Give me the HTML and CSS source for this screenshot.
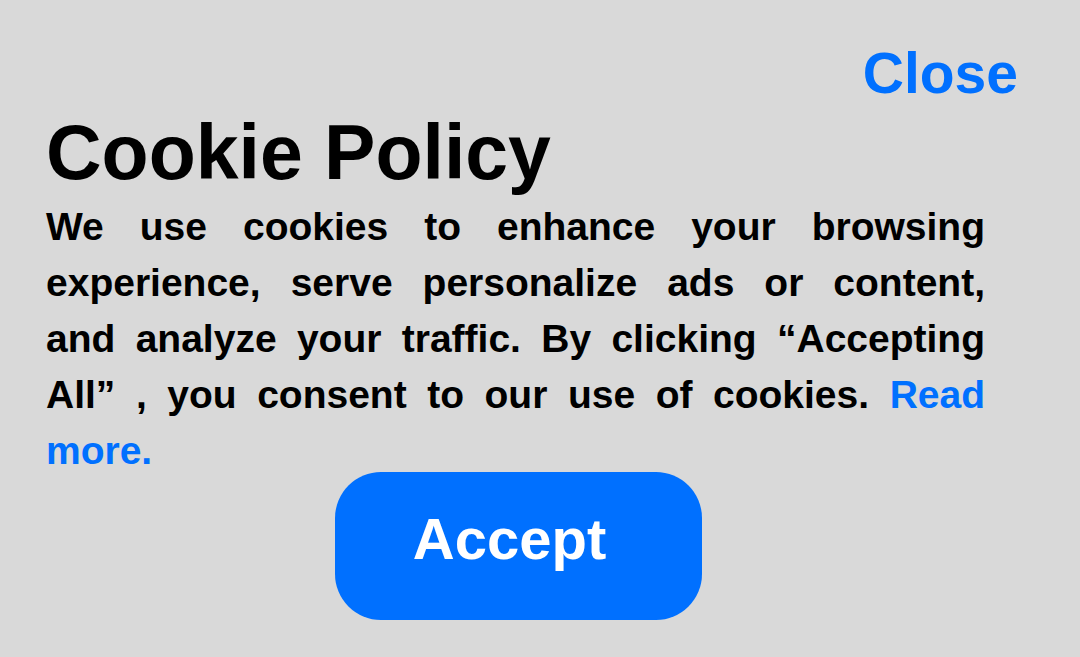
FILE: index.html
```html
<!DOCTYPE html>
<html lang="en">
<head>
<meta charset="utf-8">
<title>Cookie Policy</title>
<link rel="stylesheet" href="styles.css">
</head>
<body>
<div class="modal">
  <div class="top-bar">
    <a class="close" href="#">Close</a>
  </div>
  <h1 class="title">Cookie Policy</h1>
  <p class="text">We use cookies to enhance your browsing experience, serve personalize ads or content, and analyze your traffic. By clicking “Accepting All” , you consent to our use of cookies. <a class="link" href="#">Read more.</a></p>
  <div class="actions">
    <button class="accept" type="button">Accept</button>
  </div>
</div>
</body>
</html>
```

FILE: styles.css
```css
html, body {
  margin: 0;
  padding: 0;
  background: #d9d9d9;
}

body {
  font-family: "Liberation Sans", Arial, sans-serif;
  width: 1080px;
  height: 657px;
  overflow: hidden;
}

.modal {
  display: flex;
  flex-direction: column;
  padding: 41px 95px 0 46px;
}

.top-bar {
  display: flex;
  justify-content: flex-end;
  margin-right: -33px;
}

.close {
  font-size: 57px;
  font-weight: bold;
  line-height: 64px;
  color: #0070ff;
  text-decoration: none;
}

.title {
  margin: 1px 0 0;
  font-size: 77px;
  font-weight: bold;
  line-height: 92px;
  color: #000;
}

.text {
  margin: 1px 0 0;
  font-size: 39px;
  font-weight: bold;
  line-height: 56px;
  word-spacing: 3px;
  text-align: justify;
  color: #000;
}

.link {
  color: #0070ff;
  text-decoration: none;
}

.actions {
  display: flex;
  padding-left: 289px;
  margin-top: -7px;
}

.accept {
  width: 367px;
  height: 148px;
  border: none;
  border-radius: 46px;
  background: #0070ff;
  color: #fff;
  font-family: "Liberation Sans", Arial, sans-serif;
  font-size: 58px;
  font-weight: bold;
  padding: 0 18px 16px 0;
}
```
